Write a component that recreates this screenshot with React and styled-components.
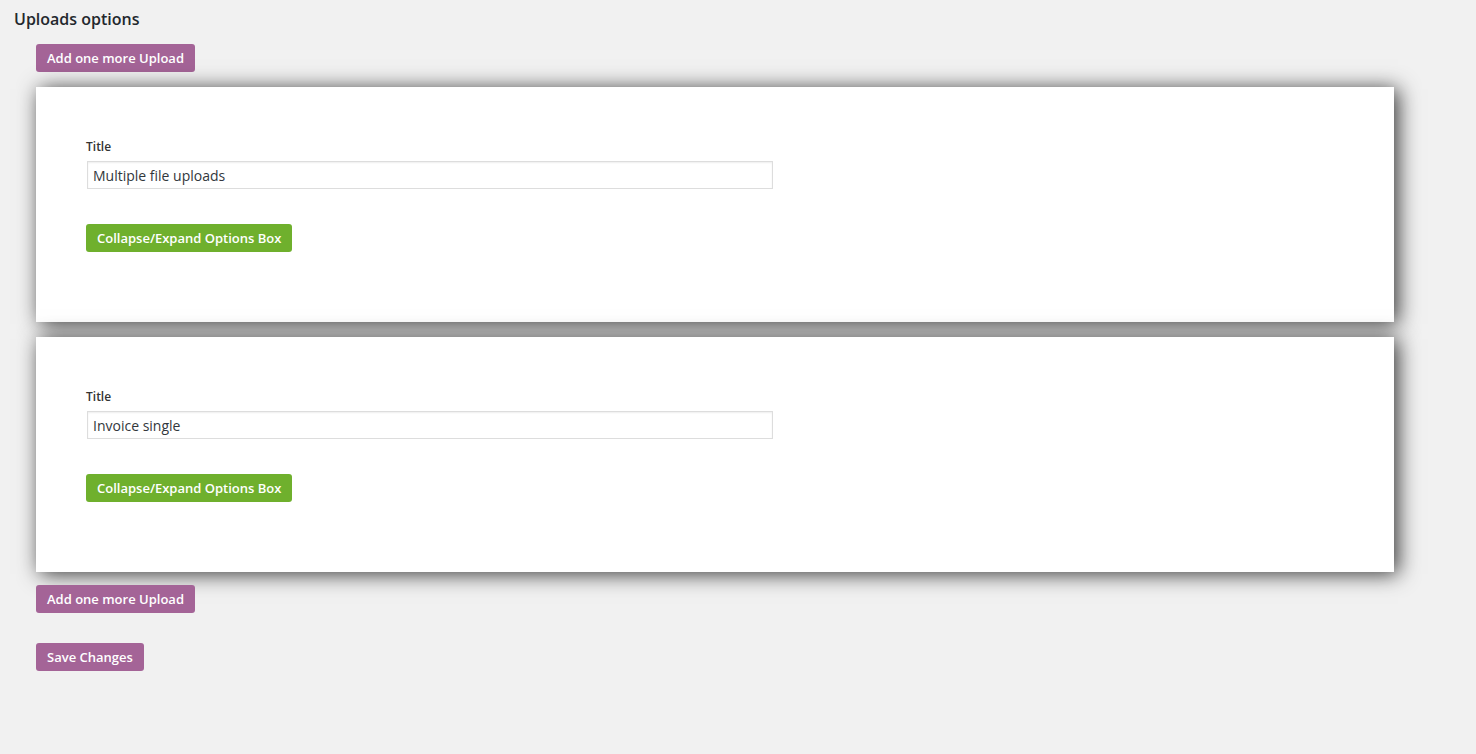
import styled, { createGlobalStyle } from 'styled-components';

const GlobalStyle = createGlobalStyle`
  body {
    margin: 0;
    background: #f1f1f1;
    font-family: 'Open Sans', 'Liberation Sans', sans-serif;
    color: #23282d;
  }
`;

const Page = styled.div`
  padding: 8px 0 80px 14px;
`;

const Heading = styled.h2`
  font-size: 16px;
  font-weight: 600;
  margin: 0 0 14px;
  line-height: 22px;
  color: #23282d;
`;

const Section = styled.div`
  padding-left: 22px;
  width: 1358px;
  display: flex;
  flex-direction: column;
  align-items: flex-start;
`;

const Button = styled.button`
  height: 28px;
  padding: 0 11px;
  border: none;
  border-radius: 3px;
  background: ${p => (p.$green ? '#6fb02d' : '#a46497')};
  color: #fff;
  font-family: 'Open Sans', 'Liberation Sans', sans-serif;
  font-size: 13px;
  font-weight: 600;
  cursor: pointer;
  margin-top: ${p => p.$top || 0}px;
`;

const Cards = styled.div`
  align-self: stretch;
  display: flex;
  flex-direction: column;
  gap: 15px;
  margin: 15px 0 13px;
`;

const Card = styled.div`
  background: #fff;
  height: 235px;
  box-sizing: border-box;
  padding: 52px 50px 0;
  box-shadow: 4px 2px 20px rgba(0, 0, 0, 0.78);
  display: flex;
  flex-direction: column;
  align-items: flex-start;
`;

const Label = styled.label`
  font-size: 12px;
  font-weight: 600;
  line-height: 16px;
  color: #333;
  margin-bottom: 6px;
`;

const Input = styled.input`
  width: 686px;
  height: 28px;
  box-sizing: border-box;
  margin-left: 1px;
  border: 1px solid #ddd;
  box-shadow: inset 0 1px 2px rgba(0, 0, 0, 0.07);
  padding: 0 5px;
  font-family: 'Open Sans', 'Liberation Sans', sans-serif;
  font-size: 14px;
  color: #32373c;
  margin-bottom: 35px;
`;

const uploads = ['Multiple file uploads', 'Invoice single'];

export default function App() {
  return (
    <Page>
      <GlobalStyle />
      <Heading>Uploads options</Heading>
      <Section>
        <Button>Add one more Upload</Button>
        <Cards>
          {uploads.map(title => (
            <Card key={title}>
              <Label>Title</Label>
              <Input defaultValue={title} />
              <Button $green>Collapse/Expand Options Box</Button>
            </Card>
          ))}
        </Cards>
        <Button>Add one more Upload</Button>
        <Button $top={30}>Save Changes</Button>
      </Section>
    </Page>
  );
}
